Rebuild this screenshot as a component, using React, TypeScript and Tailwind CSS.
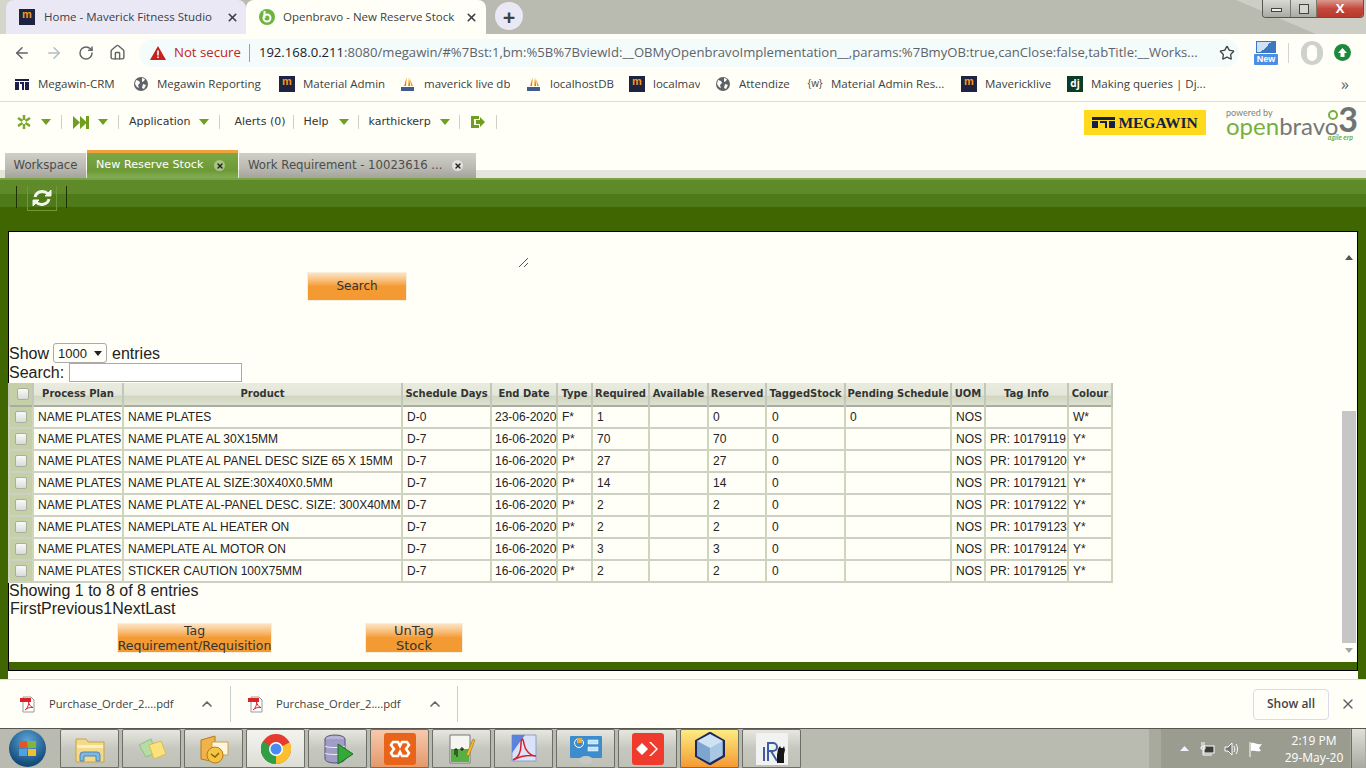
import { ArrowLeft, ArrowRight, ChevronUp, Home, RotateCw, Star, X } from "lucide-react";

const rows = [
  { product: "NAME PLATES", days: "D-0", end: "23-06-2020", type: "F*", required: "1", reserved: "0", pending: "0", tag: "", colour: "W*" },
  { product: "NAME PLATE AL 30X15MM", days: "D-7", end: "16-06-2020", type: "P*", required: "70", reserved: "70", pending: "", tag: "PR: 10179119", colour: "Y*" },
  { product: "NAME PLATE AL PANEL DESC SIZE 65 X 15MM", days: "D-7", end: "16-06-2020", type: "P*", required: "27", reserved: "27", pending: "", tag: "PR: 10179120", colour: "Y*" },
  { product: "NAME PLATE AL SIZE:30X40X0.5MM", days: "D-7", end: "16-06-2020", type: "P*", required: "14", reserved: "14", pending: "", tag: "PR: 10179121", colour: "Y*" },
  { product: "NAME PLATE AL-PANEL DESC. SIZE: 300X40MM", days: "D-7", end: "16-06-2020", type: "P*", required: "2", reserved: "2", pending: "", tag: "PR: 10179122", colour: "Y*" },
  { product: "NAMEPLATE AL HEATER ON", days: "D-7", end: "16-06-2020", type: "P*", required: "2", reserved: "2", pending: "", tag: "PR: 10179123", colour: "Y*" },
  { product: "NAMEPLATE AL MOTOR ON", days: "D-7", end: "16-06-2020", type: "P*", required: "3", reserved: "3", pending: "", tag: "PR: 10179124", colour: "Y*" },
  { product: "STICKER CAUTION 100X75MM", days: "D-7", end: "16-06-2020", type: "P*", required: "2", reserved: "2", pending: "", tag: "PR: 10179125", colour: "Y*" },
];

const headers = [
  { label: "Process Plan", width: "w-[90px]" },
  { label: "Product", width: "w-[279px]" },
  { label: "Schedule Days", width: "w-[89px]" },
  { label: "End Date", width: "w-[66px]" },
  { label: "Type", width: "w-[35px]" },
  { label: "Required", width: "w-[57px]" },
  { label: "Available", width: "w-[59px]" },
  { label: "Reserved", width: "w-[58px]" },
  { label: "TaggedStock", width: "w-[79px]" },
  { label: "Pending Schedule", width: "w-[106px]" },
  { label: "UOM", width: "w-[34px]" },
  { label: "Tag Info", width: "w-[83px]" },
  { label: "Colour", width: "w-[44px]" },
];

const MavIcon = () => (
  <span className="flex h-4 w-4 shrink-0 flex-col items-center justify-start bg-[#1d2340] text-[11px] font-bold leading-[11px] text-[#f09a1c] font-['Liberation_Sans',sans-serif]">
    m
  </span>
);

const GlobeIcon = () => (
  <svg width="16" height="16" viewBox="0 0 16 16" className="shrink-0">
    <circle cx="8" cy="8" r="7" fill="#5f6368" />
    <path d="M3 4l3 1 1 2-2 2 1 3-2-1-2-3zM9 2l3 1-1 2-2 1zM10 8l3 1-2 4-2-1z" fill="#fffff7" />
  </svg>
);

const PmaIcon = () => (
  <svg width="16" height="16" viewBox="0 0 16 16" className="shrink-0">
    <path d="M7 1L4 10h2zM9 1l-1 9h2zM10 3l1 7h2z" fill="#f2a01e" />
    <path d="M6 3l-1 7h1zM9 3v7h1z" fill="#c9741a" />
    <rect x="1" y="11" width="13" height="4" fill="#1d3f7a" opacity="0.85" />
  </svg>
);

const bookmarks = [
  { label: "Megawin-CRM", width: "w-[119px]", icon: <svg width="16" height="16" viewBox="0 0 16 16" className="shrink-0"><path d="M1 3h14v2H1zM1 6h4v8H1zM6 6h4v8H8V8H6zM11 6h4v8h-4z" fill="#1b1f4b" /></svg> },
  { label: "Megawin Reporting", width: "w-[146px]", icon: <GlobeIcon /> },
  { label: "Material Admin", width: "w-[121px]", icon: <MavIcon /> },
  { label: "maverick live db", width: "w-[126px]", icon: <PmaIcon /> },
  { label: "localhostDB", width: "w-[103px]", icon: <PmaIcon /> },
  { label: "localmav", width: "w-[86px]", icon: <MavIcon /> },
  { label: "Attendize", width: "w-[92px]", icon: <GlobeIcon /> },
  { label: "Material Admin Res...", width: "w-[154px]", icon: <span className="flex h-4 w-4 shrink-0 items-center justify-center text-[10px] text-[#444]">{"{w}"}</span> },
  { label: "Mavericklive", width: "w-[106px]", icon: <MavIcon /> },
  { label: "Making queries | Dj...", width: "w-[200px]", icon: <span className="flex h-4 w-4 shrink-0 items-center justify-center bg-[#0c3c26] text-[10px] font-bold text-white">dj</span> },
];

const Caret = () => (
  <svg width="10" height="6" viewBox="0 0 10 6" className="shrink-0">
    <path d="M0 0h10L5 6z" fill="#6f9f1e" />
  </svg>
);

const Sep = ({ cls }: { cls: string }) => <span className={`h-[14px] w-px bg-[#cfcfc8] ${cls}`} />;

const PdfIcon = () => (
  <svg width="16" height="17" viewBox="0 0 16 17" className="shrink-0">
    <path d="M3 1h8l3 3v12H3z" fill="#fff" stroke="#9a9a9a" />
    <rect x="0" y="2" width="11" height="4" fill="#d8232a" />
    <path d="M5 14c3-2 4-6 3.500-9 0 3 2 6 4.500 6.500-3-.5-6 .5-8 2.500z" fill="none" stroke="#d8232a" />
  </svg>
);

const OrangeButton = ({ cls, children }: { cls: string; children: React.ReactNode }) => (
  <div className={`flex flex-col items-center justify-center whitespace-nowrap border border-[#f6efdf] bg-[linear-gradient(#fbe3c3_0%,#fbcb93_18%,#f8b163_35%,#f39a32_50%,#f39a32_100%)] text-center leading-[15px] text-[#333] font-['DejaVu_Sans',sans-serif] ${cls}`}>
    {children}
  </div>
);

const TaskButton = ({ cls, children }: { cls?: string; children: React.ReactNode }) => (
  <div className={`flex h-[39px] w-[59px] shrink-0 items-center justify-center rounded-t-[2px] border border-[#6d6e66] ${cls ?? "bg-[linear-gradient(#e6e8df,#c6c8bf_50%,#bfc1b7)]"}`}>
    {children}
  </div>
);

const Checkbox = () => <span className="block h-[12px] w-[12px] rounded-[2px] border border-[#a9aca0] bg-[linear-gradient(#fafafa,#d9dcd5)]" />;

const cell = "whitespace-nowrap border-x-2 border-[#cdd5ba] bg-[#fffff7]";

export default function App() {
  return (
    <div className="flex h-[768px] w-[1366px] flex-col overflow-hidden bg-[#fffff7] font-['Liberation_Sans',sans-serif]">
      {/* chrome tab strip */}
      <div className="relative flex h-[34px] shrink-0 items-end bg-[#b9bbb0] font-['Open_Sans',sans-serif] text-[11.500px] text-[#3c4043]">
        <div className="absolute left-0 top-0 h-[34px] w-[12px] bg-[#d4d6cc]" />
        <svg width="190" height="34" viewBox="0 0 190 34" className="absolute right-0 top-0">
          <path d="M60 0h130v34h-50z" fill="#cdcfc6" />
        </svg>
        <div className="relative ml-[6px] flex h-[34px] w-[240px] items-center rounded-t-[8px] bg-[#ebe8f6] pl-[13px] pr-[7px]">
          <MavIcon />
          <span className="ml-[9px] flex-1 truncate">Home - Maverick Fitness Studio</span>
          <X size={13} strokeWidth={3} className="text-[#3c4043]" />
        </div>
        <div className="relative flex h-[34px] w-[240px] items-center rounded-t-[8px] bg-[#fffff7] pl-[13px] pr-[8px]">
          <svg width="16" height="16" viewBox="0 0 16 16" className="shrink-0">
            <circle cx="8" cy="8" r="8" fill="#6db33f" />
            <circle cx="8" cy="9" r="3.500" fill="none" stroke="#fff" strokeWidth="2" />
            <path d="M5.500 2v7" stroke="#fff" strokeWidth="2" />
          </svg>
          <span className="ml-[8px] flex-1 truncate">Openbravo - New Reserve Stock</span>
          <X size={13} strokeWidth={3} className="text-[#3c4043]" />
        </div>
        <div className="relative mb-[4px] ml-[9px] flex h-[28px] w-[28px] items-center justify-center rounded-full bg-[#ebe8f6] text-[#3c4043]">
          <span className="text-[22px] font-bold leading-none">+</span>
        </div>
        <div className="absolute right-[2px] top-0 flex h-[18px] w-[102px] overflow-hidden rounded-b-[4px] border border-t-0 border-[#55564f]">
          <div className="flex w-[27px] items-center justify-center bg-[linear-gradient(#d8dad2,#a9aba2)]">
            <span className="mt-[3px] h-[4px] w-[11px] border border-[#44453f] bg-[#eee]" />
          </div>
          <div className="flex w-[27px] items-center justify-center border-x border-[#77786f] bg-[linear-gradient(#d8dad2,#a9aba2)]">
            <span className="h-[10px] w-[10px] border border-[#44453f] bg-[#d6d6d0]" />
          </div>
          <div className="flex flex-1 items-center justify-center bg-[linear-gradient(#dc9a90,#c4493c_50%,#b8382c)] text-[13px] font-bold leading-none text-white">
            X
          </div>
        </div>
      </div>

      {/* address bar */}
      <div className="flex h-[34px] shrink-0 items-center pl-[13px] pt-[3px] text-[#5f6368]">
        <ArrowLeft size={18} strokeWidth={2} />
        <ArrowRight size={18} strokeWidth={2} className="ml-[14px] text-[#b5bcc4]" />
        <RotateCw size={16} strokeWidth={2.2} className="ml-[15px]" />
        <Home size={17} strokeWidth={2} className="ml-[15px]" />
        <div className="ml-[13px] flex h-[28px] w-[1100px] items-center rounded-full bg-[#f4fbfb] pl-[11px] pr-[3px] font-['Open_Sans',sans-serif]">
          <svg width="16" height="14" viewBox="0 0 16 14" className="shrink-0">
            <path d="M8 0l8 14H0z" fill="#c5221f" />
            <path d="M7.200 4.500h1.600v5H7.200zM7.200 10.500h1.600v1.600H7.200z" fill="#fff" />
          </svg>
          <span className="ml-[8px] text-[13.200px] text-[#c5221f]">Not secure</span>
          <span className="ml-[8px] h-[18px] w-px bg-[#9aa0a6]" />
          <span className="ml-[9px] min-w-0 flex-1 overflow-hidden whitespace-nowrap text-[13.100px] text-[#5f6368]">
            <span className="text-[#202124]">192.168.0.211</span>:8080/megawin/#%7Bst:1,bm:%5B%7BviewId:__OBMyOpenbravoImplementation__,params:%7BmyOB:true,canClose:false,tabTitle:__Works...
          </span>
          <Star size={16} strokeWidth={2} className="ml-[8px] mr-[1px] shrink-0 text-[#444]" />
        </div>
        <div className="ml-[15px] flex h-[24px] w-[24px] flex-col items-center">
          <span className="h-[12px] w-[20px] border border-[#3b78c2] bg-[linear-gradient(135deg,#cfe1f7_50%,#3b78c2_50%)]" />
          <span className="mt-[1px] h-[11px] w-[24px] rounded-[1px] bg-[#4a8ee8] text-center text-[9px] font-bold leading-[11px] text-white">New</span>
        </div>
        <span className="ml-[10px] h-[20px] w-px bg-[#d5d5d0]" />
        <div className="ml-[12px] flex h-[24px] w-[22px] items-center justify-center rounded-full bg-[#cfd2cc]">
          <span className="h-[16px] w-[10px] rounded-full bg-[#fffff7]" />
        </div>
        <div className="ml-[11px] flex h-[17px] w-[17px] items-center justify-center rounded-full bg-[#1a8a3c]">
          <svg width="9" height="9" viewBox="0 0 9 9"><path d="M4.500 0L9 5H6.500v4h-4V5H0z" fill="#fff" /></svg>
        </div>
      </div>

      {/* bookmarks */}
      <div className="flex h-[34px] shrink-0 items-center border-b border-[#dcd9ea] pb-[2px] pl-[14px] pr-[17px] font-['Open_Sans',sans-serif] text-[11.500px] text-[#3c4043]">
        {bookmarks.map((b) => (
          <div key={b.label} className={`flex shrink-0 items-center gap-[8px] ${b.width}`}>
            {b.icon}
            <span className="truncate">{b.label}</span>
          </div>
        ))}
        <span className="ml-auto text-[16px] leading-none text-[#5f6368]">»</span>
      </div>

      {/* openbravo navigation */}
      <div className="flex h-[48px] shrink-0 font-['DejaVu_Sans',sans-serif] text-[11px] text-[#333]">
        <div className="mt-[12px] flex h-[16px] items-center">
          <svg width="16" height="16" viewBox="0 0 16 16" className="ml-[16px] shrink-0">
            <path d="M8 1v5M8 10v5M2 4l4.500 3M9.500 9l4.500 3M14 4L9.500 7M6.500 9L2 12" stroke="#7aa82a" strokeWidth="2.500" />
          </svg>
          <span className="ml-[9px]"><Caret /></span>
          <Sep cls="ml-[10px]" />
          <svg width="16" height="13" viewBox="0 0 16 13" className="ml-[11px] shrink-0">
            <path d="M0 0l7 6.500L0 13zM7 0l7 6.500L7 13z" fill="#6f9f1e" />
            <rect x="13" y="0" width="3" height="13" fill="#6f9f1e" />
          </svg>
          <span className="ml-[9px]"><Caret /></span>
          <Sep cls="ml-[10px]" />
          <span className="ml-[10px]">Application</span>
          <span className="ml-[9px]"><Caret /></span>
          <Sep cls="ml-[10px]" />
          <span className="ml-[14px]">Alerts (0)</span>
          <Sep cls="ml-[8px]" />
          <span className="ml-[9px]">Help</span>
          <span className="ml-[10px]"><Caret /></span>
          <Sep cls="ml-[9px]" />
          <span className="ml-[10px]">karthickerp</span>
          <span className="ml-[9px]"><Caret /></span>
          <Sep cls="ml-[9px]" />
          <svg width="14" height="12" viewBox="0 0 14 12" className="ml-[11px] shrink-0">
            <path d="M0 0h8v3H3v6h5v3H0z" fill="#6f9f1e" />
            <path d="M5 4h4V1l5 5-5 5V8H5z" fill="#6f9f1e" />
          </svg>
          <Sep cls="ml-[11px]" />
        </div>
        <div className="ml-auto mr-[8px] flex">
          <div className="mt-[8px] flex h-[25px] w-[122px] items-center justify-center gap-[3px] bg-[#ffd91c]">
            <svg width="23" height="11" viewBox="0 0 23 11" className="shrink-0">
              <path d="M0 0h23v3H0zM0 4h6v7H0zM8 4h7v7h-2V6H8zM17 4h6v7h-6z" fill="#14204a" />
            </svg>
            <span className="font-['Liberation_Serif',serif] text-[15.500px] font-bold leading-none text-[#14204a]">MEGAWIN</span>
          </div>
          <div className="relative ml-[20px] mt-[5px] h-[36px] w-[132px] font-['Lato',sans-serif]">
            <span className="absolute left-[0px] top-[1px] text-[9px] leading-none text-[#808080]">powered by</span>
            <span className="absolute left-[0px] top-[6px] text-[24px] leading-[26px]">
              <span className="text-[#76b043]">open</span>
              <span className="text-[#777]">bravo</span>
            </span>
            <span className="absolute left-[102px] top-[3px] h-[10px] w-[10px] rounded-full border-2 border-[#76b043]" />
            <span className="absolute right-[0px] top-[-6px] text-[34px] font-bold leading-[36px] text-[#6e7474]">3</span>
            <span className="absolute right-[5px] top-[27px] text-[7px] italic leading-none font-bold text-[#76b043]">agile erp</span>
          </div>
        </div>
      </div>

      {/* openbravo tabs */}
      <div className="flex h-[28px] shrink-0 items-end whitespace-nowrap bg-[linear-gradient(transparent_71%,#e5e5dc_71%)] pl-[5px] font-['DejaVu_Sans',sans-serif] text-[11.700px]">
        <div className="flex h-[25px] w-[81px] items-center justify-center bg-[linear-gradient(#d0d0c8,#b9b9b0_60%,#a4a49c)] text-[#4c4c4c]">Workspace</div>
        <div className="ml-px flex h-[28px] w-[151px] items-center border-t-[3px] border-[#f0a23c] bg-[linear-gradient(#7ba843,#6d9a37_70%,#84ad58)] pl-[9px] text-white">
          <span className="w-[108px] text-[11.200px]">New Reserve Stock</span>
          <span className="ml-[10px] flex h-[11px] w-[11px] items-center justify-center rounded-full bg-[#a9c389]">
            <X size={8} strokeWidth={4} className="text-[#222]" />
          </span>
        </div>
        <div className="ml-px flex h-[25px] w-[237px] items-center bg-[linear-gradient(#d0d0c8,#b9b9b0_60%,#a4a49c)] pl-[9px] text-[#4c4c4c]">
          <span className="w-[195px]">Work Requirement - 10023616 ...</span>
          <span className="ml-[9px] flex h-[11px] w-[11px] items-center justify-center rounded-full bg-[#e3e3dc]">
            <X size={8} strokeWidth={4} className="text-[#222]" />
          </span>
        </div>
      </div>

      {/* green workspace */}
      <div className="flex h-[501px] shrink-0 flex-col bg-[#3f6600]">
        <div className="flex h-[53px] shrink-0 items-start bg-[linear-gradient(#7aa344_0,#7aa344_2px,#5f8a2a_2px,#5f8a2a_16px,#4f7a1a_16px,#4f7a1a_29px,#3f6600_29px)] pl-[16px] pt-[8px]">
          <span className="h-[22px] w-px bg-[#1f3000]" />
          <div className="ml-[10px] flex h-[25px] w-[30px] items-center justify-center border-x border-b border-[#6f9a3a]">
            <svg width="22" height="20" viewBox="0 0 22 20" fill="none" stroke="#f2f6ea" strokeWidth="3">
              <path d="M4 9a7.500 7 0 0 1 13-3" />
              <path d="M18 11a7.500 7 0 0 1-13 3" />
              <path d="M20 2v6h-6z" fill="#f2f6ea" strokeWidth="1" />
              <path d="M2 18v-6h6z" fill="#f2f6ea" strokeWidth="1" />
            </svg>
          </div>
          <span className="ml-[9px] h-[22px] w-px bg-[#1f3000]" />
        </div>
        <div className="mx-[8px] flex h-[440px] shrink-0 flex-col border border-black bg-[#fffff7] text-[16px] leading-[19px] text-[#222]">
          <div className="flex min-h-0 flex-1">
            <div className="min-w-0 flex-1">
              <div className="h-[40px] pl-[509px] pt-[25px]">
                <svg width="11" height="11" viewBox="0 0 11 11">
                  <path d="M1 10l9-9M6 10l4-4" stroke="#555" strokeWidth="1" />
                </svg>
              </div>
              <OrangeButton cls="ml-[298px] h-[29px] w-[100px] text-[12px]">Search</OrangeButton>
              <div className="mt-[43px] flex h-[18px] items-center">
                <span>Show</span>
                <span className="mx-[5px] ml-[4px] flex h-[20px] w-[54px] items-center rounded-[3px] border border-[#aaa] bg-[#fffff7] pl-[4px] text-[13px]">
                  1000
                  <svg width="8" height="5" viewBox="0 0 8 5" className="ml-[7px]"><path d="M0 0h8L4 5z" fill="#222" /></svg>
                </span>
                <span>entries</span>
              </div>
              <div className="flex h-[21px] items-center">
                <span>Search:</span>
                <span className="ml-[5px] h-[19px] w-[173px] border border-[#aaa] bg-white" />
              </div>
              <table className="-ml-px w-[1103px] table-fixed border-collapse text-[12px] leading-[14px] text-[#222]">
                <colgroup>
                  <col className="w-[24px]" />
                  {headers.map((h) => (
                    <col key={h.label} className={h.width} />
                  ))}
                </colgroup>
                <thead>
                  <tr className="h-[23px] border-b-[2px] border-[#a9ada1]">
                    <th className="border-x-2 border-[#c3c7b9] bg-[#c5d0a8] p-0">
                      <span className="flex justify-center pl-[3px]"><Checkbox /></span>
                    </th>
                    {headers.map((h) => (
                      <th
                        key={h.label}
                        className="whitespace-nowrap border-x-2 border-[#c3c7b9] bg-[linear-gradient(#e9ecdf,#e3e6d8_55%,#cfd6c0_60%,#dde2d0)] p-0 text-center font-['DejaVu_Sans',sans-serif] text-[10px] font-bold text-[#333]"
                      >
                        {h.label}
                      </th>
                    ))}
                  </tr>
                </thead>
                <tbody>
                  {rows.map((r) => (
                    <tr key={r.product} className="h-[22px] border-b-2 border-[#cdd1c4]">
                      <td className="border-x-2 border-[#cdd5ba] bg-[#c5d0a8] p-0">
                        <span className="flex justify-center pr-[1px]"><Checkbox /></span>
                      </td>
                      <td className={`${cell} pl-[4px]`}>NAME PLATES</td>
                      <td className={`${cell} pl-[4px]`}>{r.product}</td>
                      <td className={`${cell} pl-[4px]`}>{r.days}</td>
                      <td className={`${cell} pl-[3px]`}>{r.end}</td>
                      <td className={`${cell} pl-[4px]`}>{r.type}</td>
                      <td className={`${cell} pl-[4px]`}>{r.required}</td>
                      <td className={cell} />
                      <td className={`${cell} pl-[4px]`}>{r.reserved}</td>
                      <td className={`${cell} pl-[5px]`}>0</td>
                      <td className={`${cell} pl-[4px]`}>{r.pending}</td>
                      <td className={`${cell} pl-[4px]`}>NOS</td>
                      <td className={`${cell} pl-[4px]`}>{r.tag}</td>
                      <td className={`${cell} pl-[4px]`}>{r.colour}</td>
                    </tr>
                  ))}
                </tbody>
              </table>
              <div className="mt-[-2px] h-[18px] leading-[19px]">Showing 1 to 8 of 8 entries</div>
              <div className="h-[18px] pl-px leading-[19px]">FirstPrevious1NextLast</div>
              <div className="mt-[6px] flex">
                <OrangeButton cls="ml-[108px] h-[30px] w-[155px] text-[12.500px]">
                  <span>Tag</span>
                  <span>Requirement/Requisition</span>
                </OrangeButton>
                <OrangeButton cls="ml-[93px] h-[30px] w-[98px] text-[13px]">
                  <span>UnTag</span>
                  <span>Stock</span>
                </OrangeButton>
              </div>
            </div>
            <div className="flex w-[16px] shrink-0 flex-col items-center pt-[23px]">
              <svg width="8" height="5" viewBox="0 0 8 5"><path d="M4 0l4 5H0z" fill="#555" /></svg>
              <div className="mt-[151px] h-[232px] w-[14px] bg-[#c6c6c6]" />
              <svg width="8" height="5" viewBox="0 0 8 5" className="mt-[5px]"><path d="M0 0h8L4 5z" fill="#a6a6a6" /></svg>
            </div>
          </div>
          <div className="h-[8px] shrink-0 bg-[#3f6600]" />
        </div>
        <div className="mx-[8px] h-[8px] shrink-0 bg-[#fffff7]" />
      </div>

      {/* downloads shelf */}
      <div className="relative flex h-[49px] shrink-0 items-center border-t border-[#dcd9ea] font-['Open_Sans',sans-serif] text-[11.200px] text-[#3c4043]">
        <div className="flex h-[36px] w-[231px] items-center border-r border-[#c9ced0] pl-[20px]">
          <PdfIcon />
          <span className="ml-[13px] w-[124px] whitespace-nowrap">Purchase_Order_2....pdf</span>
          <ChevronUp size={16} strokeWidth={2.5} className="ml-[26px] text-[#666]" />
        </div>
        <div className="flex h-[36px] w-[227px] items-center border-r border-[#c9ced0] pl-[17px]">
          <PdfIcon />
          <span className="ml-[12px] w-[124px] whitespace-nowrap">Purchase_Order_2....pdf</span>
          <ChevronUp size={16} strokeWidth={2.5} className="ml-[27px] text-[#666]" />
        </div>
        <div className="ml-auto flex h-[31px] w-[76px] items-center justify-center rounded-[4px] border border-[#dcd9ea] text-[12px] font-semibold text-[#444]">
          Show all
        </div>
        <X size={16} strokeWidth={2} className="ml-[11px] mr-[10px] text-[#5f6368]" />
      </div>

      {/* windows taskbar */}
      <div className="flex h-[40px] shrink-0 items-end border-t border-[#55564f] bg-[#b9bbb0]">
        <div className="mr-[6px] flex h-[39px] w-[54px] shrink-0 items-center justify-center">
          <div className="grid h-[37px] w-[37px] grid-cols-2 content-center justify-center gap-[1px] rounded-full bg-[radial-gradient(circle_at_50%_30%,#5ea6d8,#17507f_70%,#0e2f52)] px-[10px]">
            <span className="h-[7px] bg-[#e2562a]" />
            <span className="h-[7px] bg-[#80b53e]" />
            <span className="h-[7px] bg-[#4da3df]" />
            <span className="h-[7px] bg-[#f2c02e]" />
          </div>
        </div>
        <div className="flex gap-[3px]">
          <TaskButton>
            <svg width="32" height="28" viewBox="0 0 32 28">
              <path d="M2 4h10l2 3h16v20H2z" fill="#f3d98a" stroke="#c7a349" />
              <path d="M3 10h26v3H3z" fill="#fdf1c2" />
              <path d="M6 26v-6a3 3 0 0 1 3-3h14a3 3 0 0 1 3 3v6h-4v-5H10v5z" fill="#7fb7e0" stroke="#4c87b8" />
            </svg>
          </TaskButton>
          <TaskButton>
            <svg width="32" height="28" viewBox="0 0 32 28">
              <path d="M3 10l12-6 5 14-10 4z" fill="#b5dca5" stroke="#8fc080" />
              <path d="M13 10l12-4 5 13-12 5z" fill="#fbe27a" stroke="#d9bb4e" />
            </svg>
          </TaskButton>
          <TaskButton>
            <svg width="32" height="32" viewBox="0 0 32 32">
              <path d="M3 7l14-4v26L3 26z" fill="#f0b24a" stroke="#b97a1a" />
              <path d="M14 9h16v13H14z" fill="#fff6dc" stroke="#c9a24e" />
              <circle cx="17" cy="22" r="8" fill="#f4c542" stroke="#b97a1a" />
              <path d="M13 21l4 3 4-4" fill="none" stroke="#8a5a10" strokeWidth="1.500" />
            </svg>
          </TaskButton>
          <TaskButton cls="bg-[linear-gradient(#f3f4ee,#dcded6)]">
            <svg width="30" height="30" viewBox="0 0 30 30">
              <circle cx="15" cy="15" r="15" fill="#e53b30" />
              <path d="M15 15L28.600 8.500A15 15 0 0 1 15 30z" fill="#fbc02d" />
              <path d="M15 15L15 30A15 15 0 0 1 1.800 7.500z" fill="#2f9e44" />
              <circle cx="15" cy="15" r="7" fill="#fff" />
              <circle cx="15" cy="15" r="5.500" fill="#4a8af4" />
            </svg>
          </TaskButton>
          <TaskButton>
            <svg width="32" height="32" viewBox="0 0 32 32">
              <ellipse cx="13" cy="6" rx="10" ry="4" fill="#b7b4d8" stroke="#55527a" />
              <path d="M3 6v20c0 2 4 4 10 4s10-2 10-4V6" fill="#a09dc8" stroke="#55527a" />
              <path d="M3 13c0 2 20 2 20 0M3 20c0 2 20 2 20 0" fill="none" stroke="#eee" />
              <path d="M16 11l15 10-15 10z" fill="#35a83a" stroke="#1c6e22" />
            </svg>
          </TaskButton>
          <TaskButton cls="bg-[linear-gradient(#f6c9ae,#e39a6b)]">
            <svg width="32" height="32" viewBox="0 0 32 32">
              <rect width="32" height="32" rx="3" fill="#e8641b" />
              <path d="M9 9h5l2 4 2-4h5l2 3-3 4 3 4-2 3h-5l-2-4-2 4H9l-2-3 3-4-3-4z" fill="none" stroke="#fff" strokeWidth="2.500" />
            </svg>
          </TaskButton>
          <TaskButton>
            <svg width="28" height="32" viewBox="0 0 28 32">
              <path d="M2 2h20v28H2z" fill="#f6f6f0" stroke="#777" />
              <rect x="3" y="16" width="18" height="13" fill="#57b140" />
              <path d="M7 22v-6h2v8M12 16h4M14 14v4" fill="none" stroke="#111" />
              <path d="M18 22l7-16 2 1-6 16z" fill="#f2b632" stroke="#8a6414" strokeWidth=".5" />
            </svg>
          </TaskButton>
          <TaskButton>
            <svg width="28" height="32" viewBox="0 0 28 32">
              <path d="M2 2h24v26H2z" fill="#dbe3fb" stroke="#8aa1c9" />
              <path d="M2 2h13L2 20z" fill="#5b83dc" />
              <path d="M3 27c5-2 8-8 8-16 0-5 2-8 3 0 1 6 6 12 12 12-7-1-15 0-23 4z" fill="none" stroke="#d42226" strokeWidth="1.500" />
            </svg>
          </TaskButton>
          <TaskButton>
            <svg width="32" height="30" viewBox="0 0 32 30">
              <rect y="2" width="32" height="22" rx="1" fill="#3d8ccd" />
              <circle cx="9" cy="9" r="4.500" fill="none" stroke="#fff" />
              <rect x="7" y="4" width="5" height="5" fill="#f2a93b" />
              <rect x="18" y="6" width="10" height="4" fill="#bfe4fa" stroke="#fff" strokeWidth=".5" />
              <rect x="18" y="13" width="10" height="4" fill="#bfe4fa" stroke="#fff" strokeWidth=".5" />
              <ellipse cx="16" cy="26" rx="7" ry="4" fill="#c9c9c2" />
            </svg>
          </TaskButton>
          <TaskButton>
            <svg width="32" height="32" viewBox="0 0 32 32">
              <rect width="32" height="32" rx="3" fill="#ef3b2e" />
              <path d="M10 10l6 6-6 6-6-6zM17 9l7 7-7 7 2 0 7-7-7-7z" fill="#fff" />
            </svg>
          </TaskButton>
          <TaskButton cls="bg-[linear-gradient(#fdeb85,#f9c85a_45%,#f49a35)]">
            <svg width="30" height="33" viewBox="0 0 30 33">
              <path d="M15 1l14 8v15l-14 8-14-8V9z" fill="#a9c7e3" stroke="#1a2a5c" strokeWidth="2.500" />
              <path d="M15 16L2 9l13-7 13 7z" fill="#cfe2f3" />
              <path d="M15 16v15L2 24V9z" fill="#7da5cf" />
            </svg>
          </TaskButton>
          <TaskButton>
            <svg width="32" height="32" viewBox="0 0 32 32">
              <rect width="32" height="32" fill="#f2f2f2" />
              <path d="M8 14v14M12 10h5a3 3 0 0 1 0 8h-5zM12 10v18M15 18l6 10" fill="none" stroke="#3d5f9f" strokeWidth="2" />
              <path d="M22 16l2-3 1 2h2l1-2 1 4-1 4v9h-7v-8z" fill="#151515" />
            </svg>
          </TaskButton>
        </div>
        <div className="ml-auto flex h-[39px] w-[217px] bg-[#a8aa9e] pl-[12px] font-['Open_Sans',sans-serif]">
          <div className="flex w-[189px] items-center bg-[#9a9c90] pl-[19px] text-white">
            <svg width="9" height="5" viewBox="0 0 9 5" className="shrink-0"><path d="M4.500 0L9 5H0z" fill="#f2f2ff" /></svg>
            <svg width="15" height="16" viewBox="0 0 15 16" className="ml-[11px] shrink-0" fill="none" stroke="#fff">
              <rect x="4" y="5" width="10" height="7" fill="#3a3a3a" />
              <path d="M2 1v5M4 1v5M1 6h4v2H1zM3 8v6h9" />
            </svg>
            <svg width="16" height="14" viewBox="0 0 16 14" className="ml-[9px] shrink-0" fill="none" stroke="#fff">
              <path d="M1 5h3l4-4v12L4 9H1z" fill="#777" />
              <path d="M10 4c1 2 1 4 0 6M12 2c2 3 2 7 0 10" />
            </svg>
            <svg width="16" height="16" viewBox="0 0 16 16" className="ml-[8px] shrink-0">
              <path d="M2 1v15" stroke="#fff" />
              <path d="M3 2c4-1 5 2 11 1l-3 4 2 3c-5 1-6-1-10 0z" fill="#fff" />
            </svg>
            <div className="ml-[14px] flex w-[76px] flex-col items-center text-[12px] leading-[17px]">
              <span>2:19 PM</span>
              <span>29-May-20</span>
            </div>
          </div>
          <div className="ml-[1px] w-[14px] border-l border-[#6d6e66] bg-[linear-gradient(#dfe0d8,#a9aba2)]" />
        </div>
      </div>
    </div>
  );
}
